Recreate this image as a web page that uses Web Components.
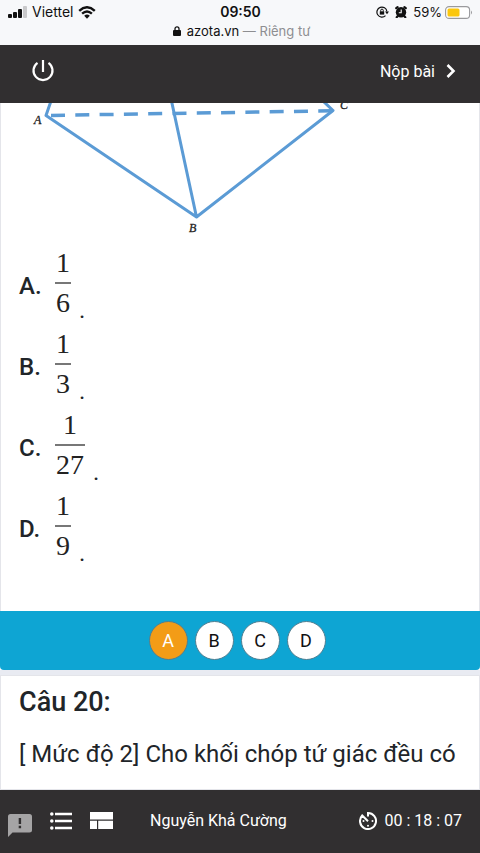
<!DOCTYPE html>
<html lang="vi">
<head>
<meta charset="utf-8">
<meta name="viewport" content="width=device-width, initial-scale=1">
<title>azota.vn</title>
<style>
  body { margin: 0; font-family: Roboto, "Noto Sans", sans-serif; color: #212529; }
</style>
</head>
<body>
<exam-app></exam-app>
<script>
function define(name, markup) {
  const template = document.createElement('template');
  template.innerHTML = markup;
  customElements.define(name, class extends HTMLElement {
    constructor() {
      super();
      this.attachShadow({ mode: 'open' }).appendChild(template.content.cloneNode(true));
    }
    connectedCallback() {
      if (name === 'answer-choice') {
        const on = this.hasAttribute('selected');
        this.shadowRoot.querySelector('button').setAttribute('aria-pressed', on);
      }
    }
  });
}

define('status-bar', `
<style>
  :host { display: block; background: #f7f8fa; color: #111; height: 45px; box-sizing: border-box; padding: 3px 7px 0 8px; font-family: Inter, "Noto Sans", sans-serif; font-size: 13px; }
  .row { display: grid; grid-template-columns: 1fr auto 1fr; align-items: center; height: 18px; font-size: 14px; line-height: 18px; }
  .side { display: flex; align-items: center; gap: 5px; }
  .end { justify-content: flex-end; gap: 6px; }
  .charge { display: flex; align-items: center; gap: 3px; font-size: 13px; }
  .time { font-weight: 600; }
  .address { display: flex; align-items: center; justify-content: center; gap: 6px; height: 19px; padding-left: 2px; }
  .private { color: #8e8e91; }
  svg { display: block; flex: none; }
</style>
<div class="row">
  <div class="side">
    <svg width="19" height="12" viewBox="0 0 19 12"><g fill="#111"><rect y="8" width="4" height="4" rx="1"/><rect x="5" y="6" width="4" height="6" rx="1"/><rect x="10" y="3" width="4" height="9" rx="1"/></g><rect x="15" width="4" height="12" rx="1" fill="#c9c9cb"/></svg>
    <span>Viettel</span>
    <svg width="18" height="13" viewBox="0 0 18 13" fill="none" stroke="#111" stroke-width="2.4"><path d="M1.2 4.8Q9-2.3 16.8 4.8M4.1 7.7Q9 3.3 13.9 7.7"/><path d="M6.2 9.8Q9 7.4 11.8 9.8L9 12.7Z" fill="#111" stroke="none"/></svg>
  </div>
  <span class="time">09:50</span>
  <div class="side end">
    <svg width="13" height="12" viewBox="0 0 13 12" fill="none" stroke="#111"><path d="M9.500 9.600A5 5 0 1 1 10.900 5.500" stroke-width="1.200"/><path d="M9 5.500h4l-2 2.800z" fill="#111" stroke="none"/><path d="M4.700 5.500V4.400a1.300 1.300 0 0 1 2.600 0v1.100"/><rect x="3.800" y="5.300" width="4.400" height="3.300" fill="#111" stroke="none"/></svg>
    <svg width="12" height="12" viewBox="0 0 12 12"><circle cx="6" cy="6.300" r="5.200" fill="#111"/><path d="M1.200 2.200 2.600 1.200M10.800 2.200 9.400 1.200M2.600 10.200 1.700 11.200M9.400 10.200l.9 1" stroke="#111" stroke-width="2.200" stroke-linecap="round"/><path d="M6.200 3.500v3.200H3.800" fill="none" stroke="#fff" stroke-width="1.100"/></svg>
    <span class="charge"><span>59%</span>
    <svg width="28" height="13" viewBox="0 0 28 13"><rect x=".6" y=".6" width="24" height="11.800" rx="3.500" fill="#fff" stroke="#9a9a9d" stroke-width="1.100"/><rect x="2.500" y="2.500" width="12" height="8" rx="1.500" fill="#fbc70d"/><path d="M26 4.500q2 2 0 4z" fill="#9a9a9d"/></svg></span>
  </div>
</div>
<div class="address">
  <svg width="8" height="10" viewBox="0 0 8 10"><rect y="4" width="8" height="6" rx="1" fill="#111"/><path d="M2 5V2.800a2 2 0 0 1 4 0V5" fill="none" stroke="#111" stroke-width="1.300"/></svg>
  <span>azota.vn <span class="private">— Riêng tư</span></span>
</div>`);

define('exam-header', `
<style>
  :host { display: flex; align-items: center; justify-content: space-between; background: #312f30; height: 58px; box-sizing: border-box; padding: 0 24px 6px 31px; }
  button { display: flex; align-items: center; gap: 10px; padding: 0; border: 0; background: none; color: #fff; font: inherit; font-size: 16px; }
  svg { display: block; }
</style>
<button aria-label="Thoát"><svg width="24" height="24" viewBox="0 0 24 24" fill="none" stroke="#fff" stroke-width="2.200"><path d="M12 1v12M6.500 3.800A9.500 9.500 0 1 0 17.500 3.800"/></svg></button>
<button><span>Nộp bài</span><svg width="11" height="14" viewBox="0 0 11 14" fill="none" stroke="#fff" stroke-width="2.600"><path d="m2.500 1 6 6-6 6"/></svg></button>`);

define('pyramid-figure', `
<style>
  :host { display: block; }
  svg { display: block; max-width: 100%; }
  text { font: italic 12px "Liberation Serif", serif; fill: #222; stroke: #222; stroke-width: .3px; }
</style>
<svg width="360" height="139" viewBox="0 103 360 139" role="img" aria-label="Hình chóp">
  <g fill="none" stroke="#5b9bd5" stroke-width="3" stroke-linejoin="round">
    <path d="M50 101 45 115.500 195.500 217 332 110.500 322 101M170.500 101l25 116"/>
    <path d="M50 115.400 332 110.800" stroke-dasharray="14 10.300" stroke-width="3.500"/>
  </g>
  <text x="33" y="124">A</text><text x="188" y="232">B</text><text x="339" y="109">C</text>
</svg>`);

define('math-fraction', `
<style>
  :host { display: flex; flex-direction: column; align-items: center; gap: 4px; font: 28px/30px "Liberation Serif", serif; color: #222; }
  .line { align-self: stretch; height: 2px; background: #777; }
  .den { padding: 0 1px; }
</style>
<slot name="num"></slot><span class="line"></span><span class="den"><slot></slot></span>`);

define('answer-option', `
<style>
  :host { display: flex; align-items: center; height: 81px; padding-left: 18px; font-size: 24px; line-height: 24px; }
  .label { width: 36px; padding-top: 6px; font-weight: 500; }
  .dot { align-self: flex-end; padding: 0 0 1px 8px; }
</style>
<span class="label"><slot name="label"></slot></span><slot></slot><span class="dot">.</span>`);

define('answer-choice', `
<style>
  :host { display: block; }
  button { display: block; width: 39px; height: 39px; padding: 0; border: 1px solid #4f7f92; border-radius: 50%; background: #fff; color: #111; font: inherit; font-size: 18px; }
  :host([selected]) button { background: #f39c17; color: #fff; }
</style>
<button><slot></slot></button>`);

define('answer-bar', `
<style>
  :host { display: flex; align-items: center; justify-content: center; gap: 7px; height: 59px; box-sizing: border-box; padding-right: 6px; background: #0ea5d3; border-radius: 0 0 4px 4px; }
</style>
<slot></slot>`);

define('question-card', `
<style>
  :host { display: block; background: #fff; border: 1px solid #e4e5ea; border-top: 0; }
</style>
<slot></slot>`);

define('question-text', `
<style>
  :host { display: block; padding: 8px 0 0 18px; }
  h2 { margin: 0; font-size: 27px; line-height: 36px; font-weight: 500; }
  p { margin: 16px 0 0; font-size: 24px; line-height: 36px; }
</style>
<h2><slot name="title"></slot></h2>
<p><slot></slot></p>`);

define('exam-footer', `
<style>
  :host { display: flex; align-items: center; height: 63px; box-sizing: border-box; padding: 0 18px 2px 8px; background: #312f30; color: #fff; font-size: 16px; }
  nav { display: flex; align-items: center; gap: 18px; }
  button { padding: 0; border: 0; background: none; }
  svg { display: block; }
  .name { margin-left: 37px; }
  .timer { display: flex; align-items: center; gap: 7px; margin-left: auto; }
</style>
<nav>
  <button aria-label="Báo lỗi"><svg width="24" height="32" viewBox="0 0 24 32"><path d="M2.500 9h19q2.500 0 2.500 2.500v14q0 2-2.500 2H4.500L0 32V11.500Q0 9 2.500 9z" fill="#a5a4a5"/><path d="M10.700 13h2.400v6h-2.400zM10.700 20.800h2.400v2.400h-2.400z" fill="#312f30"/></svg></button>
  <button aria-label="Danh sách"><svg width="22" height="18" viewBox="0 0 22 18" fill="#fff"><circle cx="1.800" cy="2" r="1.800"/><circle cx="1.800" cy="9" r="1.800"/><circle cx="1.800" cy="16" r="1.800"/><path d="M5 .8h17v2.400H5zM5 7.800h17v2.400H5zM5 14.800h17v2.400H5z"/></svg></button>
  <button aria-label="Bố cục"><svg width="23" height="17" viewBox="0 0 23 17" fill="#fff"><path d="M0 0h23v7.500H0zM0 8.700h7V17H0zM8.200 8.700H23V17H8.200z"/></svg></button>
</nav>
<span class="name">Nguyễn Khả Cường</span>
<span class="timer"><svg width="18" height="18" viewBox="0 0 18 18" fill="none" stroke="#fff" stroke-width="2"><path d="M9 4.500V1a8 8 0 1 1-5.800 2.500L9 9.300"/><g fill="#fff" stroke="none"><circle cx="9" cy="13.800" r="1"/><circle cx="13.500" cy="9" r="1"/><circle cx="4.500" cy="9" r="1"/></g></svg><span>00 : 18 : 07</span></span>`);

define('exam-app', `
<style>
  :host { display: flex; flex-direction: column; height: 100vh; overflow: hidden; }
  status-bar, exam-header, exam-footer { flex: none; }
  main { flex: 1; min-height: 0; overflow: hidden; display: flex; flex-direction: column; gap: 5px; background: #e9ebf2; }
  question-card { flex: none; }
  .options { padding-bottom: 45px; }
  .next { flex: 1; border-top: 1px solid #e4e5ea; }
  .current { border: 0; }
  .body { border: solid #e4e5ea; border-width: 0 1px; }
</style>
<status-bar></status-bar>
<exam-header></exam-header>
<main>
  <question-card class="current">
    <div class="body">
      <pyramid-figure></pyramid-figure>
      <div class="options">
        <answer-option><span slot="label">A.</span><math-fraction><span slot="num">1</span>6</math-fraction></answer-option>
        <answer-option><span slot="label">B.</span><math-fraction><span slot="num">1</span>3</math-fraction></answer-option>
        <answer-option><span slot="label">C.</span><math-fraction><span slot="num">1</span>27</math-fraction></answer-option>
        <answer-option><span slot="label">D.</span><math-fraction><span slot="num">1</span>9</math-fraction></answer-option>
      </div>
    </div>
    <answer-bar><answer-choice selected>A</answer-choice><answer-choice>B</answer-choice><answer-choice>C</answer-choice><answer-choice>D</answer-choice></answer-bar>
  </question-card>
  <question-card class="next">
    <question-text><span slot="title">Câu 20:</span>[ Mức độ 2] Cho khối chóp tứ giác đều có</question-text>
  </question-card>
</main>
<exam-footer></exam-footer>`);
</script>
</body>
</html>
